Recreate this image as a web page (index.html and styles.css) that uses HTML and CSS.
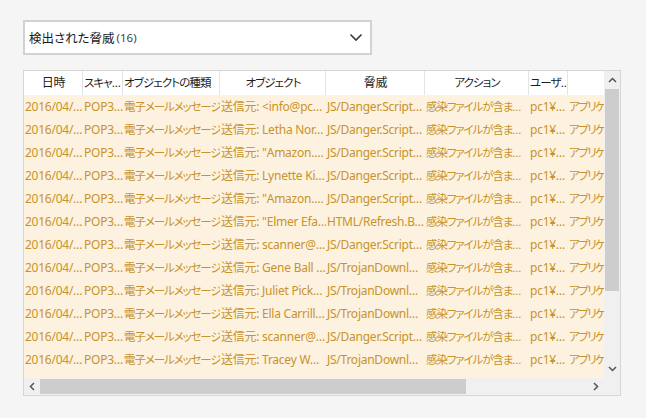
FILE: index.html
```html
<!DOCTYPE html>
<html lang="ja">
<head>
<meta charset="utf-8">
<link rel="stylesheet" href="styles.css">
</head>
<body>
<div class="page">
  <div class="select">
    <span class="sel-label">検出された脅威</span>
    <span class="sel-count">(16)</span>
    <svg class="chev" width="14" height="9" viewBox="0 0 14 9"><path d="M1.5 1.5 L7 7 L12.5 1.5" fill="none" stroke="#3a3a3a" stroke-width="1.6"/></svg>
  </div>
  <div class="panel">
    <div class="viewport">
      <div class="row head">
        <div class="hc c">日時</div>
        <div class="hc j">スキャ…</div>
        <div class="hc j">オブジェクトの種類</div>
        <div class="hc c j">オブジェクト</div>
        <div class="hc c">脅威</div>
        <div class="hc c j">アクション</div>
        <div class="hc j">ユーザ…</div>
        <div class="hc last"></div>
      </div>
      <div class="body">
        <div class="row"><div>2016/04/…</div><div>POP3…</div><div class="j">電子メールメッセージ</div><div>送信元: &lt;info@pc…</div><div>JS/Danger.Script…</div><div class="j">感染ファイルが含ま…</div><div>pc1¥…</div><div class="j k">アプリケ</div></div>
        <div class="row"><div>2016/04/…</div><div>POP3…</div><div class="j">電子メールメッセージ</div><div>送信元: Letha Nor…</div><div>JS/Danger.Script…</div><div class="j">感染ファイルが含ま…</div><div>pc1¥…</div><div class="j k">アプリケ</div></div>
        <div class="row"><div>2016/04/…</div><div>POP3…</div><div class="j">電子メールメッセージ</div><div>送信元: "Amazon.…</div><div>JS/Danger.Script…</div><div class="j">感染ファイルが含ま…</div><div>pc1¥…</div><div class="j k">アプリケ</div></div>
        <div class="row"><div>2016/04/…</div><div>POP3…</div><div class="j">電子メールメッセージ</div><div>送信元: Lynette Ki…</div><div>JS/Danger.Script…</div><div class="j">感染ファイルが含ま…</div><div>pc1¥…</div><div class="j k">アプリケ</div></div>
        <div class="row"><div>2016/04/…</div><div>POP3…</div><div class="j">電子メールメッセージ</div><div>送信元: "Amazon.…</div><div>JS/Danger.Script…</div><div class="j">感染ファイルが含ま…</div><div>pc1¥…</div><div class="j k">アプリケ</div></div>
        <div class="row"><div>2016/04/…</div><div>POP3…</div><div class="j">電子メールメッセージ</div><div>送信元: "Elmer Efa…</div><div>HTML/Refresh.B…</div><div class="j">感染ファイルが含ま…</div><div>pc1¥…</div><div class="j k">アプリケ</div></div>
        <div class="row"><div>2016/04/…</div><div>POP3…</div><div class="j">電子メールメッセージ</div><div>送信元: scanner@…</div><div>JS/Danger.Script…</div><div class="j">感染ファイルが含ま…</div><div>pc1¥…</div><div class="j k">アプリケ</div></div>
        <div class="row"><div>2016/04/…</div><div>POP3…</div><div class="j">電子メールメッセージ</div><div>送信元: Gene Ball …</div><div>JS/TrojanDownl…</div><div class="j">感染ファイルが含ま…</div><div>pc1¥…</div><div class="j k">アプリケ</div></div>
        <div class="row"><div>2016/04/…</div><div>POP3…</div><div class="j">電子メールメッセージ</div><div>送信元: Juliet Pick…</div><div>JS/TrojanDownl…</div><div class="j">感染ファイルが含ま…</div><div>pc1¥…</div><div class="j k">アプリケ</div></div>
        <div class="row"><div>2016/04/…</div><div>POP3…</div><div class="j">電子メールメッセージ</div><div>送信元: Ella Carrill…</div><div>JS/TrojanDownl…</div><div class="j">感染ファイルが含ま…</div><div>pc1¥…</div><div class="j k">アプリケ</div></div>
        <div class="row"><div>2016/04/…</div><div>POP3…</div><div class="j">電子メールメッセージ</div><div>送信元: scanner@…</div><div>JS/Danger.Script…</div><div class="j">感染ファイルが含ま…</div><div>pc1¥…</div><div class="j k">アプリケ</div></div>
        <div class="row"><div>2016/04/…</div><div>POP3…</div><div class="j">電子メールメッセージ</div><div>送信元: Tracey W…</div><div>JS/TrojanDownl…</div><div class="j">感染ファイルが含ま…</div><div>pc1¥…</div><div class="j k">アプリケ</div></div>
      </div>
    </div>
    <div class="vscroll">
      <div class="arrow"><svg width="9" height="6" viewBox="0 0 9 6"><path d="M1 5 L4.5 1.5 L8 5" fill="none" stroke="#555" stroke-width="1.5"/></svg></div>
      <div class="vthumb"></div>
      <div class="vtrack"></div>
      <div class="arrow"><svg width="9" height="6" viewBox="0 0 9 6"><path d="M1 1 L4.5 4.5 L8 1" fill="none" stroke="#555" stroke-width="1.5"/></svg></div>
    </div>
    <div class="hscroll">
      <div class="harrow"><svg width="6" height="9" viewBox="0 0 6 9"><path d="M5 1 L1.5 4.5 L5 8" fill="none" stroke="#555" stroke-width="1.5"/></svg></div>
      <div class="hthumb"></div>
      <div class="htrack"></div>
      <div class="harrow"><svg width="6" height="9" viewBox="0 0 6 9"><path d="M1 1 L4.5 4.5 L1 8" fill="none" stroke="#555" stroke-width="1.5"/></svg></div>
    </div>
    <div class="corner"></div>
  </div>
</div>
</body>
</html>
```

FILE: styles.css
```css
html, body {
  margin: 0;
  padding: 0;
  background: #f5f5f5;
}
body {
  font-family: "Noto Sans", "Noto Sans CJK JP", sans-serif;
  font-feature-settings: "palt";
  width: 646px;
  height: 418px;
  overflow: hidden;
}
.page {
  padding: 20px 0 0 23px;
}
.select {
  box-sizing: border-box;
  width: 349px;
  height: 35px;
  background: #fff;
  border: 2px solid #d2d2d2;
  display: flex;
  align-items: center;
  padding: 0 0 0 4px;
  margin-bottom: 15px;
}
.sel-label {
  font-size: 12.5px;
  color: #1a1a1a;
}
.sel-count {
  font-size: 11.5px;
  color: #444;
  margin-left: 2px;
}
.chev {
  margin-left: auto;
  margin-right: 7px;
}
.panel {
  box-sizing: border-box;
  width: 598px;
  height: 326px;
  border: 1px solid #d6d6d6;
  background: #fff;
  display: grid;
  grid-template-columns: 1fr 16px;
  grid-template-rows: 1fr 17px;
}
.viewport {
  overflow: hidden;
  background: #fdf2df;
  min-width: 0;
}
.row {
  display: grid;
  grid-template-columns: 59px 40px 97px 106px 99px 104px 39px 70px;
  height: 23px;
  font-size: 12px;
  line-height: 23px;
  color: #c8922c;
  white-space: nowrap;
}
.row > div {
  overflow: hidden;
  padding-left: 1px;
  letter-spacing: -0.25px;
}
.row > div.j {
  font-size: 11.5px;
  letter-spacing: -1.1px;
}
.row > div.j.k {
  letter-spacing: -1.5px;
}
.row.head {
  height: 24px;
  line-height: 24px;
  background: #fff;
  color: #1e1e1e;
}
.row.head .hc {
  border-right: 1px solid #e4e4e4;
  padding-left: 1px;
}
.row.head .hc.j {
  letter-spacing: -0.9px;
}
.row.head .hc.c {
  text-align: center;
}
.row.head .hc.last {
  border-right: none;
}
.vscroll {
  background: #f0f0f0;
  display: flex;
  flex-direction: column;
}
.arrow {
  height: 18px;
  display: flex;
  align-items: center;
  justify-content: center;
  flex: none;
}
.vthumb {
  height: 202px;
  margin: 0 1px;
  background: #cdcdcd;
  flex: none;
}
.vtrack {
  flex: 1;
}
.hscroll {
  background: #f0f0f0;
  display: flex;
  align-items: stretch;
}
.harrow {
  width: 16px;
  display: flex;
  align-items: center;
  justify-content: center;
  flex: none;
}
.hthumb {
  width: 426px;
  margin: 1px 0;
  background: #cdcdcd;
  flex: none;
}
.htrack {
  flex: 1;
}
.corner {
  background: #f0f0f0;
}
```
